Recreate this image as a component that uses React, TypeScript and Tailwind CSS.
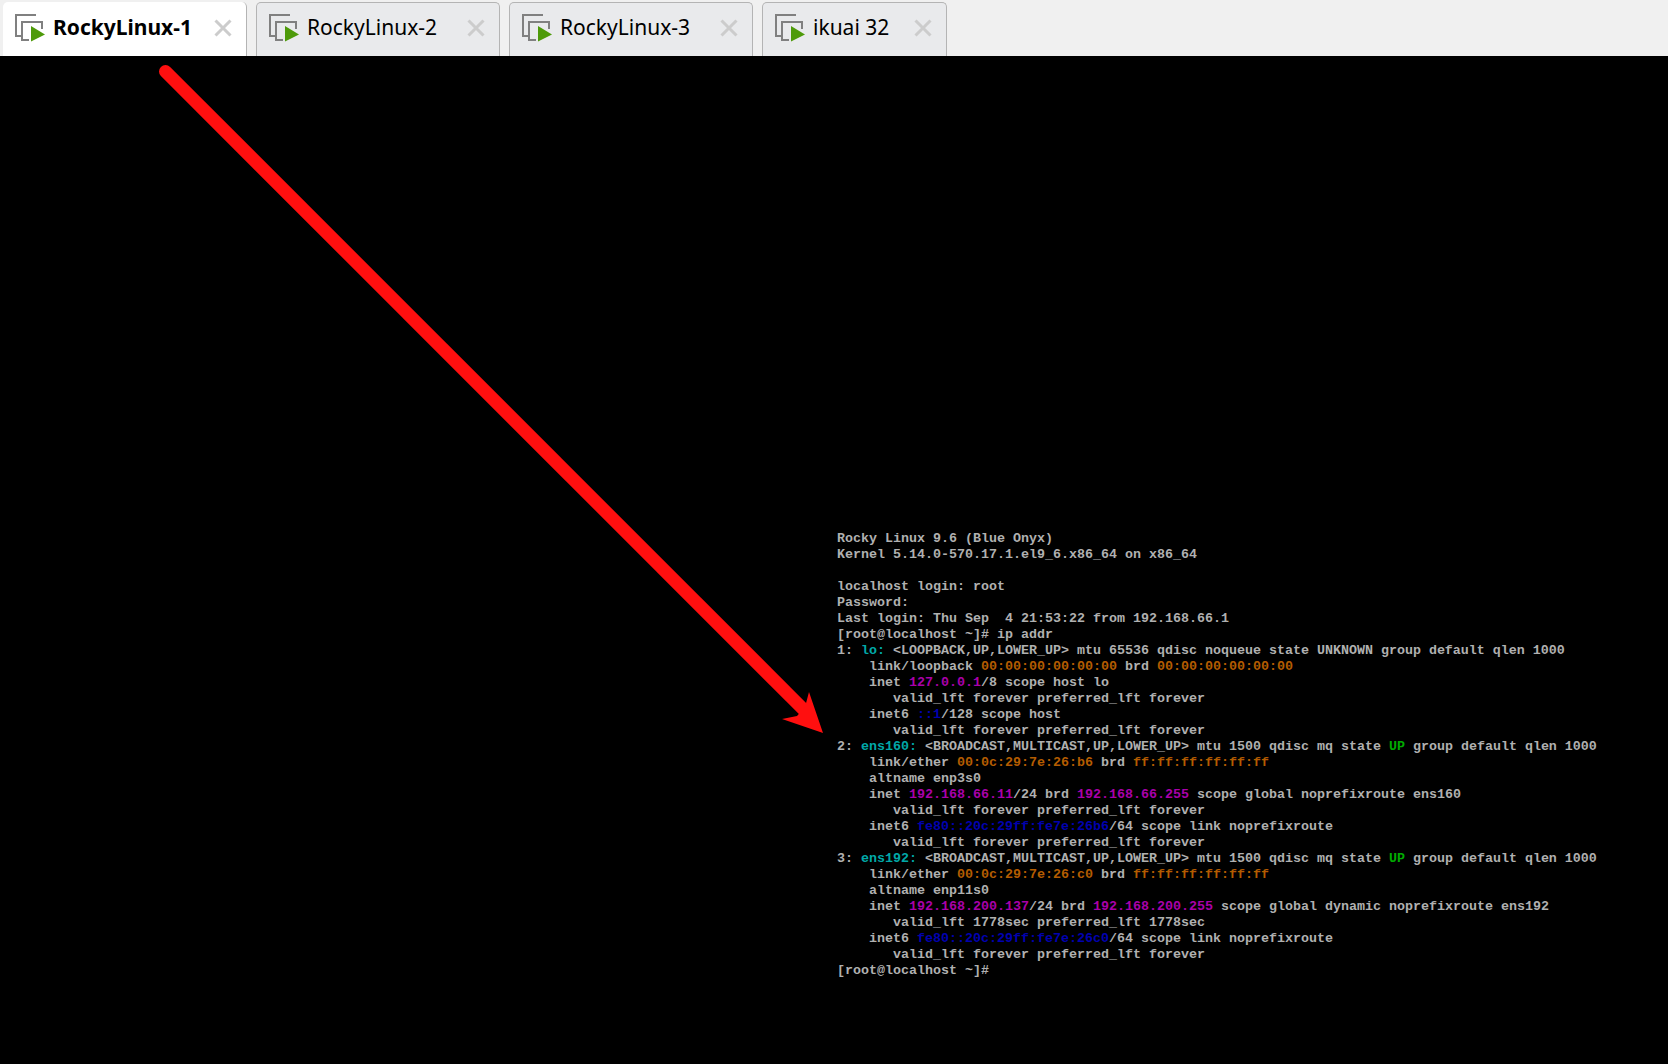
import React from "react";

type Seg = [string, string?];

const TABS = [
  { name: "RockyLinux-1", active: true, width: "w-[244px]" },
  { name: "RockyLinux-2", active: false, width: "w-[244px]" },
  { name: "RockyLinux-3", active: false, width: "w-[244px]" },
  { name: "ikuai 32", active: false, width: "w-[185px]" },
];

const COLORS: Record<string, string> = {
  c: "text-[#00a8a8]",
  o: "text-[#b45c00]",
  m: "text-[#aa00aa]",
  b: "text-[#0000b0]",
  g: "text-[#00aa00]",
};

const LINES: Seg[][] = [
  [["Rocky Linux 9.6 (Blue Onyx)"]],
  [["Kernel 5.14.0-570.17.1.el9_6.x86_64 on x86_64"]],
  [[" "]],
  [["localhost login: root"]],
  [["Password:"]],
  [["Last login: Thu Sep  4 21:53:22 from 192.168.66.1"]],
  [["[root@localhost ~]# ip addr"]],
  [["1: "], ["lo: ", "c"], ["<LOOPBACK,UP,LOWER_UP> mtu 65536 qdisc noqueue state UNKNOWN group default qlen 1000"]],
  [["    link/loopback "], ["00:00:00:00:00:00", "o"], [" brd "], ["00:00:00:00:00:00", "o"]],
  [["    inet "], ["127.0.0.1", "m"], ["/8 scope host lo"]],
  [["       valid_lft forever preferred_lft forever"]],
  [["    inet6 "], ["::1", "b"], ["/128 scope host"]],
  [["       valid_lft forever preferred_lft forever"]],
  [["2: "], ["ens160: ", "c"], ["<BROADCAST,MULTICAST,UP,LOWER_UP> mtu 1500 qdisc mq state "], ["UP", "g"], [" group default qlen 1000"]],
  [["    link/ether "], ["00:0c:29:7e:26:b6", "o"], [" brd "], ["ff:ff:ff:ff:ff:ff", "o"]],
  [["    altname enp3s0"]],
  [["    inet "], ["192.168.66.11", "m"], ["/24 brd "], ["192.168.66.255", "m"], [" scope global noprefixroute ens160"]],
  [["       valid_lft forever preferred_lft forever"]],
  [["    inet6 "], ["fe80::20c:29ff:fe7e:26b6", "b"], ["/64 scope link noprefixroute"]],
  [["       valid_lft forever preferred_lft forever"]],
  [["3: "], ["ens192: ", "c"], ["<BROADCAST,MULTICAST,UP,LOWER_UP> mtu 1500 qdisc mq state "], ["UP", "g"], [" group default qlen 1000"]],
  [["    link/ether "], ["00:0c:29:7e:26:c0", "o"], [" brd "], ["ff:ff:ff:ff:ff:ff", "o"]],
  [["    altname enp11s0"]],
  [["    inet "], ["192.168.200.137", "m"], ["/24 brd "], ["192.168.200.255", "m"], [" scope global dynamic noprefixroute ens192"]],
  [["       valid_lft 1778sec preferred_lft 1778sec"]],
  [["    inet6 "], ["fe80::20c:29ff:fe7e:26c0", "b"], ["/64 scope link noprefixroute"]],
  [["       valid_lft forever preferred_lft forever"]],
  [["[root@localhost ~]#"]],
];

const VmIcon = () => (
  <svg width="32" height="30" viewBox="0 0 32 30" className="shrink-0" fill="none">
    <path d="M21 2H1V23H6" stroke="#808080" strokeWidth="2" />
    <path d="M14 27H7V9H27V16" stroke="#808080" strokeWidth="2" />
    <path d="M16 13L30 21.5L16 28.5Z" fill="#4e9a0a" />
  </svg>
);

const CloseIcon = () => (
  <svg width="18" height="18" viewBox="0 0 18 18" className="shrink-0" fill="none">
    <path d="M1.5 1.5L16.5 16.5M16.5 1.5L1.5 16.5" stroke="#cccccc" strokeWidth="3" />
  </svg>
);

const Tab = ({ name, active, width }: { name: string; active: boolean; width: string }) => (
  <div
    className={`${width} h-[54px] flex items-center pl-[12px] pr-[14px] pb-[3px] rounded-t-[5px] border border-b-0 border-[#b4b4b4] ${
      active ? "bg-white border-t-0 border-l-0" : "bg-[#e9eaec]"
    }`}
  >
    <VmIcon />
    <span
      className={`ml-[6px] text-[21px] text-black font-['Noto_Sans',sans-serif] whitespace-pre ${
        active ? "font-bold" : ""
      }`}
    >
      {name}
    </span>
    <span className="ml-auto">
      <CloseIcon />
    </span>
  </div>
);

export default function App() {
  return (
    <div className="relative w-[1668px] h-[1064px] overflow-hidden bg-black flex flex-col">
      <div className="h-[56px] shrink-0 bg-[#f0f0f0] flex items-end gap-[9px] pl-[3px]">
        {TABS.map((tab) => (
          <Tab key={tab.name} {...tab} />
        ))}
      </div>

      <div className="pl-[837px] pt-[475px] font-['Liberation_Mono',monospace] text-[13.33px] leading-[16px] text-[#b0b0b0] font-bold">
        {LINES.map((line, i) => (
          <div key={i} className="h-[16px] whitespace-pre">
            {line.map(([text, color], j) => (
              <span key={j} className={color ? COLORS[color] : undefined}>
                {text}
              </span>
            ))}
          </div>
        ))}
      </div>

      {/* annotation arrow over the console */}
      <svg className="absolute left-0 top-0 pointer-events-none" width="1668" height="1064" fill="none">
        <path d="M165.5 71.5L803 709" stroke="#ff0f0f" strokeWidth="13" strokeLinecap="round" />
        <path d="M809 692L823 733L782 719L797 716L805 707Z" fill="#ff0f0f" />
      </svg>
    </div>
  );
}
